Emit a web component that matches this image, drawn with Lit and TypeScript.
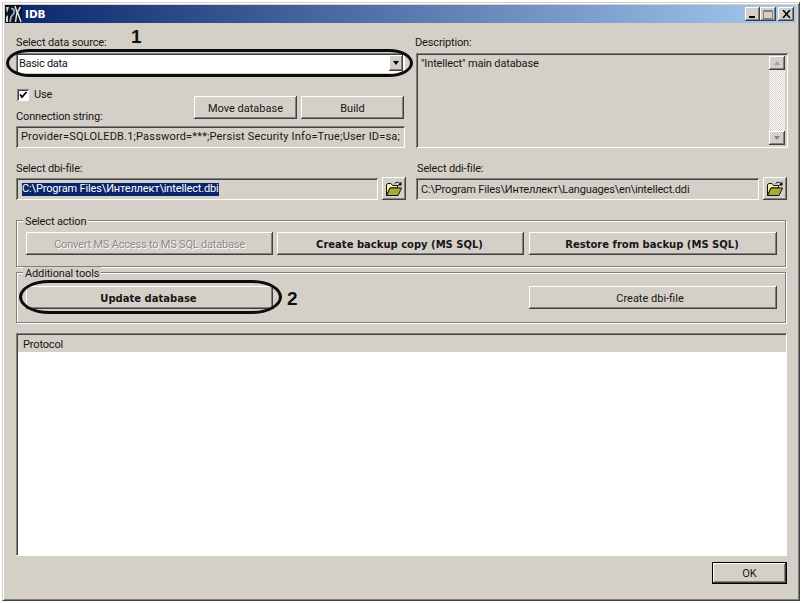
import { LitElement, html, css } from "lit";
import { customElement } from "lit/decorators.js";

const folder = html`<svg width="18" height="16" viewBox="0 0 18 16">
  <path d="M1.5 14.5V3.5L3 2.5H6L7.5 4.5H12.5V7H5L1.5 14.5Z" fill="#f2f2a8" stroke="#111" stroke-width="1"/>
  <path d="M1.5 14.5L5 7H16.5L13 14.5Z" fill="#aaaa34" stroke="#111" stroke-width="1"/>
  <path d="M9.5 2.8C11 .8 13.5 .8 15 2.6" fill="none" stroke="#111" stroke-width="1"/>
  <path d="M16.5 .5V4.5H12.5Z" fill="#111"/>
</svg>`;

@customElement("app-root")
export class AppRoot extends LitElement {
  static styles = css`
    :host { display: block; width: 802px; height: 603px; background: #fff; overflow: hidden; padding: 2px 0 0 2px; box-sizing: border-box;
      font-family: Roboto, "Liberation Sans", Arial, sans-serif; font-size: 11px; color: #161616; letter-spacing: -0.15px; }
    .window { box-sizing: border-box; width: 798px; height: 599px; background: #d4d0c8;
      border: 1px solid; border-color: #d4d0c8 #404040 #404040 #d4d0c8;
      box-shadow: inset 1px 1px 0 #fff, inset -1px -1px 0 #808080; padding: 2px 3px 0 2px;
      display: flex; flex-direction: column; }
    .title { height: 18px; flex: none; display: flex; align-items: center; padding: 0 2px 0 0;
      background: linear-gradient(90deg, #0a246a, #a6caf0); color: #fff; font-weight: bold; letter-spacing: 0;
      font-family: "DejaVu Sans", sans-serif; font-size: 10.5px; gap: 3px; }
    .title svg { flex: none; }
    .title .name { flex: 1; }
    .ctrl { display: flex; }
    .ctrl .b { box-sizing: border-box; width: 16px; height: 14px; background: #d4d0c8; color: #000; display: flex;
      box-shadow: inset -1px -1px 0 #404040, inset 1px 1px 0 #fff, inset -2px -2px 0 #808080; }
    .ctrl .min { width: 15px; }
    .ctrl .b svg { margin: auto; }
    .ctrl .close { margin-left: 2px; }
    .body { flex: 1; display: flex; flex-direction: column; padding: 13px 0 0 11px; min-height: 0; position: relative; }
    .top { display: grid; grid-template-columns: 389px 373px; column-gap: 10px; height: 112px; }
    .left { display: flex; flex-direction: column; }
    .lbl { height: 13px; line-height: 13px; white-space: nowrap; }
    .combo { box-sizing: border-box; margin-top: 4px; height: 20px; background: #fff; display: flex; align-items: center;
      padding: 0 2px 0 3px; justify-content: space-between; letter-spacing: -0.3px;
      box-shadow: inset 1px 1px 0 #808080, inset -1px -1px 0 #fff, inset 2px 2px 0 #404040; }
    .arrowbtn { box-sizing: border-box; width: 14px; height: 16px; background: #d4d0c8; display: flex;
      box-shadow: inset -1px -1px 0 #404040, inset 1px 1px 0 #fff, inset -2px -2px 0 #808080; }
    .arrowbtn i { margin: auto; width: 0; height: 0; border: 3.5px solid transparent; border-top: 4px solid #000; border-bottom: 0; }
    .midrow { display: flex; justify-content: space-between; height: 53px; }
    .midleft { display: flex; flex-direction: column; gap: 9px; padding-top: 15px; }
    .use { display: flex; align-items: center; gap: 5px; margin-left: 1px; height: 13px; }
    .cb { box-sizing: border-box; width: 12px; height: 12px; background: #fff; flex: none; display: flex;
      box-shadow: inset 1px 1px 0 #808080, inset -1px -1px 0 #fff, inset 2px 2px 0 #404040; }
    .btns { display: flex; gap: 4px; padding: 23px 1px 0 0; }
    .btn { box-sizing: border-box; display: flex; align-items: center; justify-content: center; background: #d4d0c8; letter-spacing: 0;
      box-shadow: inset -1px -1px 0 #404040, inset 1px 1px 0 #fff, inset -2px -2px 0 #808080; white-space: nowrap; height: 23px; padding-top: 1px; }
    .btn.w103 { width: 103px; }
    .field { box-sizing: border-box; height: 22px; display: flex; align-items: center; padding: 0 5px; white-space: nowrap; overflow: hidden;
      box-shadow: inset 1px 1px 0 #808080, inset -1px -1px 0 #fff, inset 2px 2px 0 #404040; }
    .conn { letter-spacing: 0.18px; padding-bottom: 1px; }
    .right { display: flex; flex-direction: column; }
    .desc { box-sizing: border-box; margin: 4px 0 0 1px; height: 95px; width: 372px; display: flex; justify-content: space-between;
      padding: 3px 3px 3px 5px; line-height: 15px;
      box-shadow: inset 1px 1px 0 #808080, inset -1px -1px 0 #fff, inset 2px 2px 0 #404040; }
    .scroll { width: 16px; display: flex; flex-direction: column; justify-content: space-between;
      background: repeating-conic-gradient(#d4d0c8 0 25%, #fff 0 50%) 0 0 / 2px 2px; }
    .sb { box-sizing: border-box; width: 16px; height: 14px; background: #d4d0c8; display: flex;
      box-shadow: inset -1px -1px 0 #404040, inset 1px 1px 0 #fff, inset -2px -2px 0 #808080; }
    .sb i { margin: auto; width: 0; height: 0; border: 3.5px solid transparent; }
    .sb .up { border-bottom: 4px solid #a0a0a0; border-top: 0; }
    .sb .dn { border-top: 4px solid #808080; border-bottom: 0; }
    .files { display: flex; margin-top: 14px; }
    .fcol { display: flex; flex-direction: column; }
    .fcol.a { width: 400px; }
    .fcol.b .lbl { margin-left: 1px; }
    .frow { display: flex; gap: 4px; margin-top: 3px; }
    .frow.a .field { width: 362px; }
    .frow.b .field { width: 343px; letter-spacing: -0.17px; }
    .sel { background: #0a246a; color: #fff; padding: 0 0 1px; margin-left: 1px; line-height: 12px; }
    .open { box-sizing: border-box; width: 24px; height: 23px; margin-top: -1px; background: #d4d0c8; display: flex;
      box-shadow: inset -1px -1px 0 #404040, inset 1px 1px 0 #fff, inset -2px -2px 0 #808080; }
    .open svg { margin: auto; }
    .group { box-sizing: border-box; position: relative; width: 770px; display: flex; justify-content: space-between;
      border: 1px solid #808080; box-shadow: inset 1px 1px 0 #fff, 1px 1px 0 #fff; }
    .legend { position: absolute; left: 6px; top: -6px; background: #d4d0c8; padding: 0 2px; height: 13px; line-height: 13px; }
    .g1 { margin-top: 20px; height: 47px; padding: 11px 0 0 9px; justify-content: flex-start; gap: 4px; }
    .g1 .btn:last-of-type { margin-left: 1px; }
    .g2 { margin-top: 5px; height: 51px; padding: 13px 8px 0 9px; }
    .bold { font-family: "DejaVu Sans", sans-serif; font-weight: bold; font-size: 10px; padding-right: 2px; }
    .w247 { width: 247px; }
    .w248 { width: 248px; }
    .shift { padding-right: 6px; }
    .dis { color: #8c8a84; text-shadow: 1px 1px 0 #fff; letter-spacing: -0.2px; }
    .proto { margin-top: 10px; width: 770px; height: 222px; box-sizing: border-box; display: flex; flex-direction: column;
      box-shadow: inset 1px 1px 0 #808080, inset 2px 2px 0 #404040, 1px 1px 0 #fff; padding: 2px 0 0 2px; }
    .proto .h { box-sizing: border-box; height: 17px; line-height: 17px; padding: 1px 0 0 5px; flex: none; }
    .proto .w { flex: 1; background: #fff; }
    .foot { display: flex; justify-content: flex-end; padding: 7px 9px 0 0; }
    .ok { width: 75px; height: 22px; border: 1px solid #000; padding-top: 0; }
    .ring { position: absolute; box-sizing: border-box; border: 3px solid #0c0c0c; pointer-events: none; }
    .r1 { left: 1px; top: 26px; width: 407px; height: 28px; border-radius: 24px / 14px; }
    .r2 { left: 14px; top: 257px; width: 263px; height: 34px; border-radius: 30px / 17px; }
    .num { position: absolute; font-family: "Liberation Sans", Arial, sans-serif; font-weight: bold; font-size: 19px; line-height: 18px; color: #111; letter-spacing: 0; }
    .n1 { left: 126px; top: 5px; }
    .n2 { left: 282px; top: 267px; }
  `;

  private logo() {
    return html`<svg width="17" height="18" viewBox="0 0 17 18">
      <rect width="17" height="18" fill="#101418"/>
      <path d="M1 2H4L2 8ZM1 12L3 10V17H1Z" fill="#c8d4e0"/>
      <path d="M6 4C8 3 10 5 9 8L6 12L5 17" fill="none" stroke="#8aa2bd" stroke-width="2"/>
      <path d="M10 1L12 7L10.5 17M15.5 2L12.5 7L16 17" fill="none" stroke="#d8e4f0" stroke-width="1.5"/>
    </svg>`;
  }

  render() {
    return html`
      <div class="window">
        <div class="title">
          ${this.logo()}<span class="name">IDB</span>
          <div class="ctrl">
            <div class="b min"><svg width="8" height="8" viewBox="0 0 8 8"><path d="M0 6H6V8H0Z" fill="#000"/></svg></div>
            <div class="b"><svg width="10" height="9" viewBox="0 0 10 9"><path d="M.5 .5H9.5V8.5H.5Z" fill="none" stroke="#808080"/><path d="M0 1.5H10" stroke="#808080"/></svg></div>
            <div class="b close"><svg width="9" height="8" viewBox="0 0 9 8"><path d="M1 0L8 8M8 0L1 8" stroke="#000" stroke-width="1.6"/></svg></div>
          </div>
        </div>
        <div class="body">
          <div class="top">
            <div class="left">
              <div class="lbl">Select data source:</div>
              <div class="combo"><span>Basic data</span><div class="arrowbtn"><i></i></div></div>
              <div class="midrow">
                <div class="midleft">
                  <div class="use"><div class="cb"><svg width="12" height="12" viewBox="0 0 12 12"><path d="M3 5.5L5 8L9.5 3" fill="none" stroke="#000" stroke-width="1.8"/></svg></div>Use</div>
                  <div class="lbl">Connection string:</div>
                </div>
                <div class="btns">
                  <div class="btn w103">Move database</div>
                  <div class="btn w103">Build</div>
                </div>
              </div>
              <div class="field conn">Provider=SQLOLEDB.1;Password=***;Persist Security Info=True;User ID=sa;</div>
            </div>
            <div class="right">
              <div class="lbl">Description:</div>
              <div class="desc">
                <span>"Intellect" main database</span>
                <div class="scroll">
                  <div class="sb"><i class="up"></i></div>
                  <div class="sb"><i class="dn"></i></div>
                </div>
              </div>
            </div>
          </div>
          <div class="files">
            <div class="fcol a">
              <div class="lbl">Select dbi-file:</div>
              <div class="frow a"><div class="field"><span class="sel">C:\\Program Files\\Интеллект\\intellect.dbi</span></div><div class="open">${folder}</div></div>
            </div>
            <div class="fcol b">
              <div class="lbl">Select ddi-file:</div>
              <div class="frow b"><div class="field">C:\\Program Files\\Интеллект\\Languages\\en\\intellect.ddi</div><div class="open">${folder}</div></div>
            </div>
          </div>
          <div class="group g1">
            <span class="legend">Select action</span>
            <div class="btn dis w247">Convert MS Access to MS SQL database</div>
            <div class="btn bold w247">Create backup copy (MS SQL)</div>
            <div class="btn bold w248">Restore from backup (MS SQL)</div>
          </div>
          <div class="group g2">
            <span class="legend">Additional tools</span>
            <div class="btn bold w247">Update database</div>
            <div class="btn w248 shift">Create dbi-file</div>
          </div>
          <div class="proto"><div class="h">Protocol</div><div class="w"></div></div>
          <div class="foot"><div class="btn ok">OK</div></div>
          <div class="ring r1"></div>
          <div class="ring r2"></div>
          <div class="num n1">1</div>
          <div class="num n2">2</div>
        </div>
      </div>
    `;
  }
}
